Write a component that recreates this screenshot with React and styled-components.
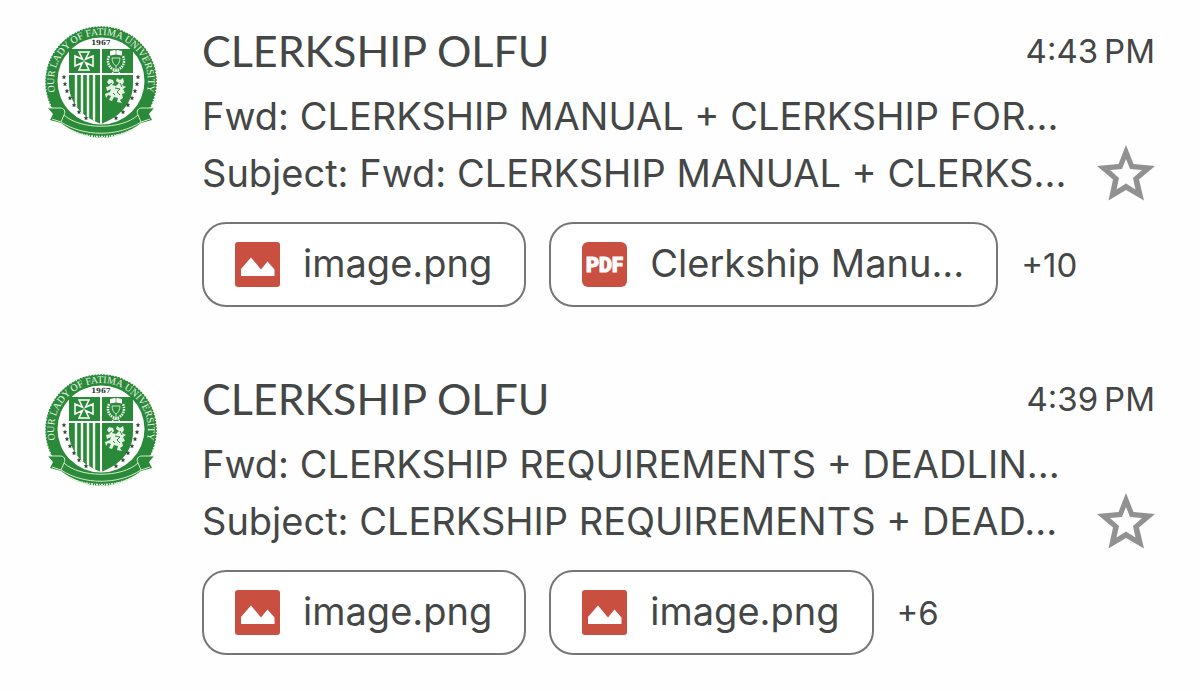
import React, { useId } from 'react';
import styled, { createGlobalStyle } from 'styled-components';

const GlobalStyle = createGlobalStyle`
  * { box-sizing: border-box; }
  body {
    margin: 0;
    background: #fefefe;
    color: #444746;
    font-family: Inter, 'Liberation Sans', sans-serif;
  }
`;

const MessageList = styled.ul`
  list-style: none;
  margin: 0;
  padding: 0 45px;
`;

const Message = styled.li`
  display: grid;
  grid-template-columns: 112px minmax(0, 1fr);
  column-gap: 45px;
  padding: 24px 0 41px;
`;

const Heading = styled.header`
  display: flex;
  align-items: flex-start;
  justify-content: space-between;
  height: 56px;
`;

const Sender = styled.h2`
  margin: 0;
  font-family: Lato, sans-serif;
  font-size: 43px;
  font-weight: 400;
  line-height: 54px;
  white-space: nowrap;
`;

const Time = styled.time`
  font-size: 33px;
  line-height: 54px;
  white-space: nowrap;
`;

const Summary = styled.div`
  display: flex;
  align-items: flex-end;
  justify-content: space-between;
  margin-top: 8px;
`;

const Line = styled.p`
  margin: 0;
  font-size: 38px;
  line-height: 57px;
  white-space: nowrap;
`;

const StarButton = styled.button`
  flex: none;
  display: block;
  border: 0;
  padding: 0;
  background: none;
  height: 57px;
  width: 58px;
  cursor: pointer;
`;

const Attachments = styled.div`
  display: flex;
  align-items: center;
  gap: 23px;
  margin-top: 20px;
`;

const Chip = styled.button`
  display: flex;
  align-items: center;
  gap: 23px;
  height: 85px;
  padding: 0 32px 0 31px;
  border: 2px solid #747775;
  border-radius: 24px;
  background: #fff;
  color: inherit;
  font: inherit;
  font-size: 38px;
  white-space: nowrap;
  cursor: pointer;
`;

const FileName = styled.span`
  line-height: 44px;
  padding-bottom: 4px;
`;

const More = styled.span`
  font-size: 33px;
`;

const Seal = styled.svg`
  display: block;
  width: 112px;
  height: 114px;
  margin-top: 1px;
`;

const GREEN = '#2b8a3a';

const stars = [
  [28, 61], [29, 68], [31, 75], [34, 82], [38, 89], [43, 96], [50, 102],
];

function UniversitySeal() {
  const id = useId();
  return (
    <Seal viewBox="9 9 112 114" role="img" aria-label="Our Lady of Fatima University">
      <defs>
        <path id={`${id}ring`} d="M 21.2 83 A 47 47 0 1 1 108.8 83" />
        <clipPath id={`${id}shield`}>
          <path d="M33 33H97V68C97 87 84 101 65 108C46 101 33 87 33 68Z" />
        </clipPath>
      </defs>
      <circle cx="65" cy="66" r="55" fill={GREEN} stroke={GREEN} strokeWidth="1.5" strokeDasharray="2 1" />
      <circle cx="65" cy="65" r="43.5" fill="#fff" />
      <text fill="#e9f5e6" fontFamily="Liberation Serif, serif" fontSize="10">
        <textPath href={`#${id}ring`} startOffset="50%" textAnchor="middle">
          OUR LADY OF FATIMA UNIVERSITY
        </textPath>
      </text>
      <text x="65" y="29" textAnchor="middle" fill="#26302a" fontFamily="DejaVu Serif, serif" fontWeight="700" fontSize="7">1967</text>
      <g clipPath={`url(#${id}shield)`}>
        <rect x="33" y="33" width="64" height="76" fill={GREEN} />
        <path d="M40 58V110M46 58V110M52 58V110M58 58V110" stroke="#f4faf2" strokeWidth="2.4" />
        <path d="M65 33V110M33 58H97" stroke="#fff" strokeWidth="2" />
      </g>
      <path
        d="M43 36H53L49.500 43.200L57 40V50L49.500 46.500L53 54H43L46.500 46.500L39 50V40L46.500 43.200Z"
        fill="none"
        stroke="#fff"
        strokeWidth="1.500"
      />
      <g fill="none" stroke="#eef7ec">
        <path d="M73 40C70 47 74 53 80 54.500C86 53 90 47 87 40" strokeWidth="2.600" strokeDasharray="1.600 .9" />
        <path d="M76 42H84C84 46 82 49 80 50C78 49 76 46 76 42ZM80 50V54" strokeWidth=".8" />
        <path d="M76 57L80 54L84 57" strokeWidth="1" />
      </g>
      <path d="M74 35L79 34L80 35L81 34L86 35V39.500L80 38.500L74 39.500Z" fill="#fff" />
      <path d="M80 35V39" stroke={GREEN} strokeWidth=".6" />
      <path d="M71 66L73 63L77 64L78 67L76 69L80 70L83 67L80 65L81 62L84 64L87 62L88 66L86 69L90 71L87 73L89 77L86 78L87 82L84 84L86 87L81 86L82 82L78 81L76 85L73 84L75 80L72 79L70 82L69 78L74 76L75 73L71 75L70 71L74 70Z" fill="#e7f3e4" />
      <path d="M76 67L73 69M79 72L84 73L81 76L84 79M77 77L79 79M84 67L86 71" fill="none" stroke={GREEN} strokeWidth="1" />
      <g fill="#33443a">
        {stars.flatMap(([x, y]) => [x, 130 - x].map((cx) => (
          <path
            key={`${cx}-${y}`}
            transform={`translate(${cx} ${y})`}
            d="M0-2.400L.7-.7L2.400-.6L1 .5L1.500 2.200L0 1.200L-1.500 2.200L-1 .5L-2.400-.6L-.7-.7Z"
          />
        )))}
      </g>
      <path d="M12 92H24L29 96L28 99C44 114 86 114 102 99L101 96L106 92H118L113 98L116 104L105 107C82 125 48 125 25 107L14 104L17 98Z" fill={GREEN} />
      <path d="M12 92H24C28 92 30 95 28 99C44 114 86 114 102 99C100 95 102 92 106 92H118M28 99L25 106C48 121 82 121 105 106L102 99M25 106L16 103M105 106L114 103" fill="none" stroke="#d4ecc9" strokeWidth="1" />
      <path d="M34 114C53 123 77 123 96 114" fill="none" stroke="#d9edd5" strokeWidth="2" strokeDasharray="1 1 2 1" />
    </Seal>
  );
}

function ImageIcon() {
  return (
    <svg width="45" height="45" viewBox="0 0 45 45" aria-hidden="true">
      <rect width="45" height="45" rx="3" fill="#c94f41" />
      <path d="M6 34V27L16 15.500L26 27.500L32.500 19.500L39.500 27.500V34Z" fill="#fff" />
    </svg>
  );
}

function PdfIcon() {
  return (
    <svg width="45" height="45" viewBox="0 0 45 45" aria-hidden="true">
      <rect width="45" height="45" rx="6" fill="#c94f41" />
      <text x="22.500" y="30" textAnchor="middle" fill="#fff" stroke="#fff" strokeWidth="1" fontFamily="Roboto, sans-serif" fontWeight="900" fontSize="20">PDF</text>
    </svg>
  );
}

const messages = [
  {
    time: '4:43 PM',
    subject: 'Fwd: CLERKSHIP MANUAL + CLERKSHIP FOR...',
    preview: 'Subject: Fwd: CLERKSHIP MANUAL + CLERKS...',
    files: [{ name: 'image.png' }, { name: 'Clerkship Manu...', pdf: true }],
    more: '+10',
  },
  {
    time: '4:39 PM',
    subject: 'Fwd: CLERKSHIP REQUIREMENTS + DEADLIN...',
    preview: 'Subject: CLERKSHIP REQUIREMENTS + DEAD...',
    files: [{ name: 'image.png' }, { name: 'image.png' }],
    more: '+6',
  },
];

export default function App() {
  return (
    <>
      <GlobalStyle />
      <MessageList>
        {messages.map((m) => (
          <Message key={m.time}>
            <UniversitySeal />
            <div>
              <Heading>
                <Sender>CLERKSHIP OLFU</Sender>
                <Time>{m.time.replace(' ', '\u2009')}</Time>
              </Heading>
              <Summary>
                <div>
                  <Line>{m.subject}</Line>
                  <Line>{m.preview}</Line>
                </div>
                <StarButton aria-label="Star message">
                  <svg width="58" height="57" viewBox="0 0 58 57" aria-hidden="true">
                    <path fillRule="evenodd" fill="#919191" d="M29 0L36.500 19L58 21L42 34.500L47 55.500L29 45L11.500 55.500L16 34.500L0 21L21.500 19ZM29 14L25 24L13 25L22 33L19.500 44.500L29 38.500L38.500 44.500L36 33L45 25L33 24Z" />
                  </svg>
                </StarButton>
              </Summary>
              <Attachments>
                {m.files.map((f, i) => (
                  <Chip key={i}>
                    {f.pdf ? <PdfIcon /> : <ImageIcon />}
                    <FileName>{f.name}</FileName>
                  </Chip>
                ))}
                <More>{m.more}</More>
              </Attachments>
            </div>
          </Message>
        ))}
      </MessageList>
    </>
  );
}
